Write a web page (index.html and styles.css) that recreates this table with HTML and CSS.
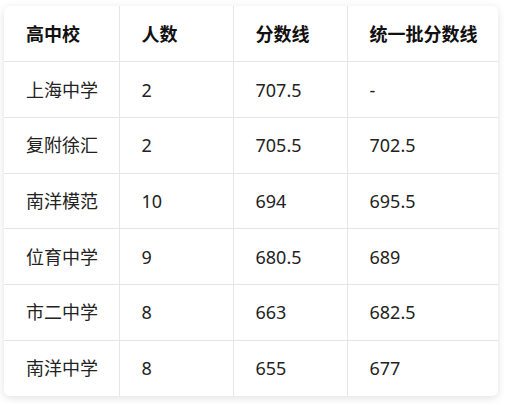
FILE: index.html
```html
<!DOCTYPE html>
<html lang="zh">
<head>
<meta charset="utf-8">
<link rel="stylesheet" href="styles.css">
</head>
<body>
<div class="card">
<table class="score-table">
<colgroup>
<col class="c1"><col class="c2"><col class="c3"><col class="c4">
</colgroup>
<thead>
<tr><th>高中校</th><th>人数</th><th>分数线</th><th>统一批分数线</th></tr>
</thead>
<tbody>
<tr><td>上海中学</td><td>2</td><td>707.5</td><td>-</td></tr>
<tr><td>复附徐汇</td><td>2</td><td>705.5</td><td>702.5</td></tr>
<tr><td>南洋模范</td><td>10</td><td>694</td><td>695.5</td></tr>
<tr><td>位育中学</td><td>9</td><td>680.5</td><td>689</td></tr>
<tr><td>市二中学</td><td>8</td><td>663</td><td>682.5</td></tr>
<tr><td>南洋中学</td><td>8</td><td>655</td><td>677</td></tr>
</tbody>
</table>
</div>
</body>
</html>
```
FILE: styles.css
```css
html, body {
  margin: 0;
  background: #ffffff;
}
body {
  padding: 6px 7px 9px 4px;
  font-family: "Noto Sans", "Noto Sans CJK SC", sans-serif;
}
.card {
  width: 494px;
  height: 390px;
  background: #fff;
  border-radius: 6px;
  box-shadow: 0 2px 8px rgba(0, 0, 0, 0.12);
  overflow: hidden;
}
.score-table {
  width: 494px;
  border-collapse: collapse;
  table-layout: fixed;
}
.c1 { width: 115px; }
.c2 { width: 114px; }
.c3 { width: 114px; }
.c4 { width: 151px; }
.score-table th,
.score-table td {
  height: 55.7px;
  padding: 0 0 0 22px;
  box-sizing: border-box;
  text-align: left;
  font-size: 18px;
  line-height: 24px;
  color: #222;
  border: 1px solid #e6e6e6;
}
.score-table th {
  font-weight: 700;
  color: #111;
}
.score-table tr:first-child th { border-top: none; }
.score-table tr:last-child td { border-bottom: none; }
.score-table th:first-child,
.score-table td:first-child { border-left: none; }
.score-table th:last-child,
.score-table td:last-child { border-right: none; }
```
